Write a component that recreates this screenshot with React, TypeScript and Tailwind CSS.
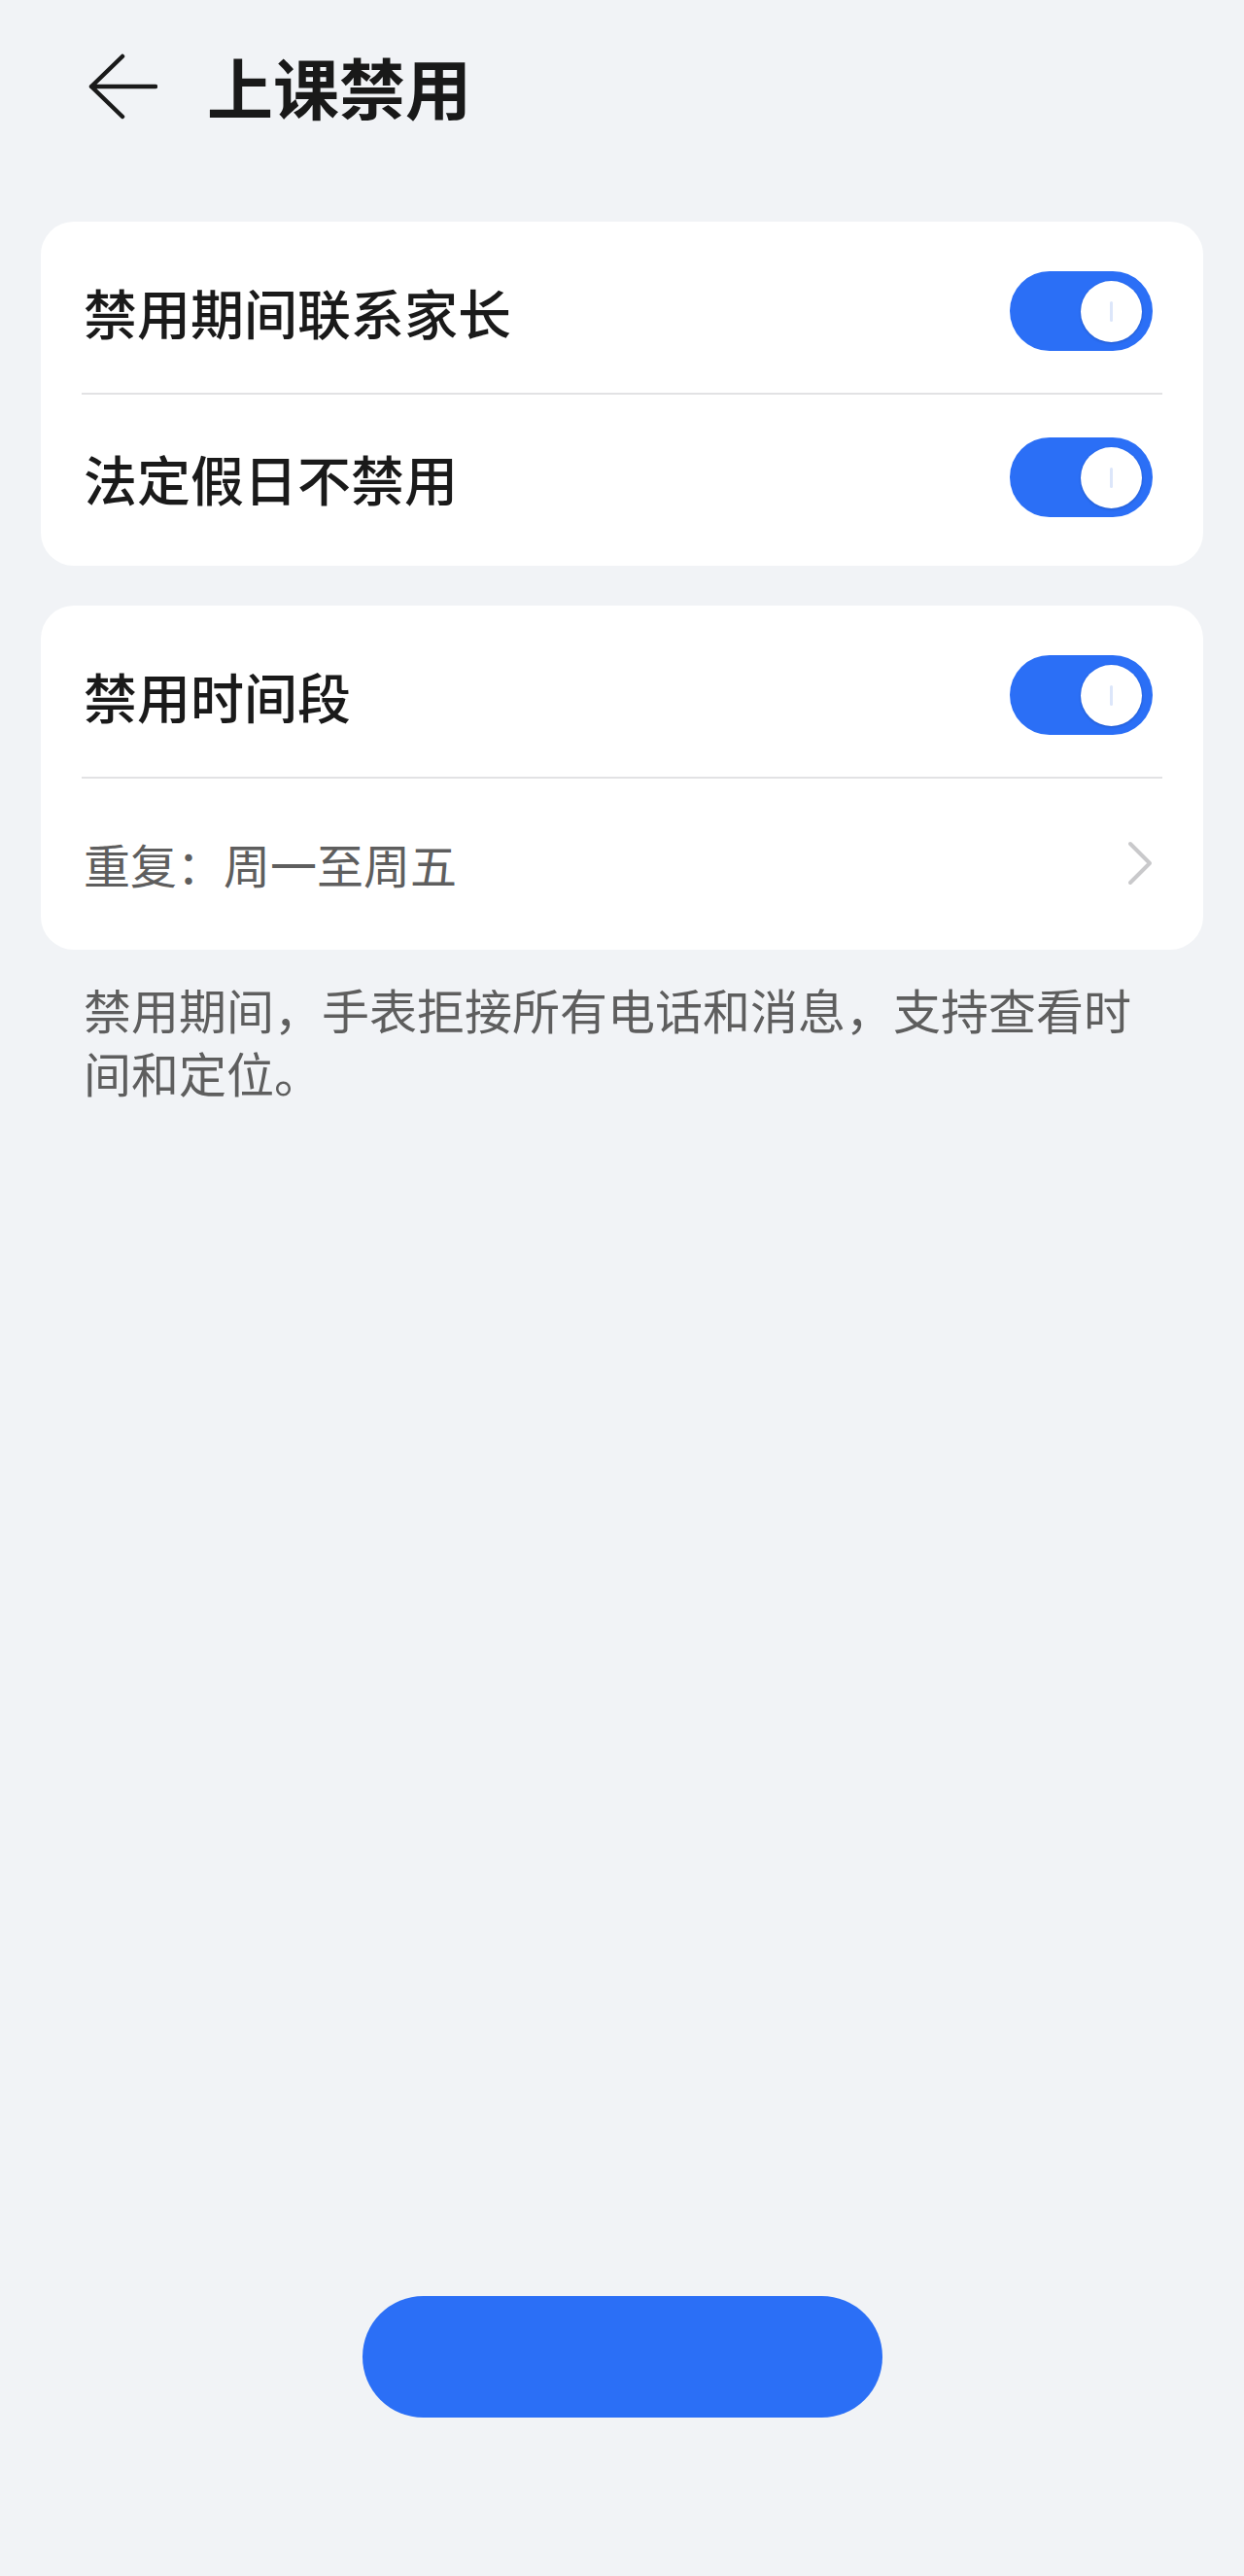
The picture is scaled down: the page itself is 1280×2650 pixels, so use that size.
import React from 'react';

const BLUE = 'bg-[#2b6ff6]';

const Toggle: React.FC = () => (
  <div className={`w-[147px] h-[82px] rounded-full ${BLUE} flex items-center justify-end pr-[11px] shrink-0`}>
    <div className="w-[63px] h-[63px] rounded-full bg-white shadow-[0_1px_3px_rgba(0,0,0,0.18)] flex items-center justify-center">
      <div className="w-[3px] h-[21px] rounded-full bg-[#dce6fa]" />
    </div>
  </div>
);

const Divider: React.FC = () => (
  <div className="mx-[42px] h-[2px] bg-[#e2e2e4]" />
);

// first rows sit a little low in the card, second rows a little high
const ToggleRow: React.FC<{ label: string; first?: boolean }> = ({ label, first }) => (
  <div
    className={`h-[176px] flex items-center justify-between pl-[44px] pr-[52px] ${first ? 'pt-[8px]' : 'pb-[6px]'}`}
  >
    <span className="text-[55px] leading-none font-medium text-[#1a1a1a]">{label}</span>
    <Toggle />
  </div>
);

export default function App() {
  return (
    <div
      className="min-h-[2650px] w-full bg-[#f1f3f6] flex flex-col"
      style={{ fontFamily: '"Noto Sans CJK SC", "Noto Sans", sans-serif' }}
    >
      {/* header */}
      <div className="h-[178px] flex items-center pl-[90px]">
        <svg width="72" height="70" viewBox="0 0 72 70" fill="none" className="shrink-0">
          <path d="M36 4 L4 35 L36 66 M4 35 H70" stroke="#1a1a1a" strokeWidth="4.5" strokeLinecap="round" strokeLinejoin="round" />
        </svg>
        <h1 className="ml-[51px] text-[68px] leading-none font-bold text-[#191919]">上课禁用</h1>
      </div>

      <div className="mt-[50px] mx-[42px] bg-white rounded-[34px] overflow-hidden">
        <ToggleRow label="禁用期间联系家长" first />
        <Divider />
        <ToggleRow label="法定假日不禁用" />
      </div>

      <div className="mt-[41px] mx-[42px] bg-white rounded-[34px] overflow-hidden">
        <ToggleRow label="禁用时间段" first />
        <Divider />
        <div className="h-[176px] pb-[2px] flex items-center justify-between pl-[44px] pr-[52px]">
          <span className="text-[48px] leading-none text-[#5e5e5e]">重复：周一至周五</span>
          <svg width="26" height="46" viewBox="0 0 26 46" fill="none">
            <path d="M3 3 L23 23 L3 43" stroke="#c9c9cb" strokeWidth="4" strokeLinecap="round" strokeLinejoin="round" />
          </svg>
        </div>
      </div>

      <p className="mt-[28px] pl-[86px] pr-[84px] text-[49px] leading-[65px] text-[#5e5e5e]">
        禁用期间，手表拒接所有电话和消息，支持查看时间和定位。
      </p>

      <div className="mt-auto mb-[163px] flex justify-center">
        <button className={`w-[535px] h-[125px] rounded-full ${BLUE}`} />
      </div>
    </div>
  );
}
